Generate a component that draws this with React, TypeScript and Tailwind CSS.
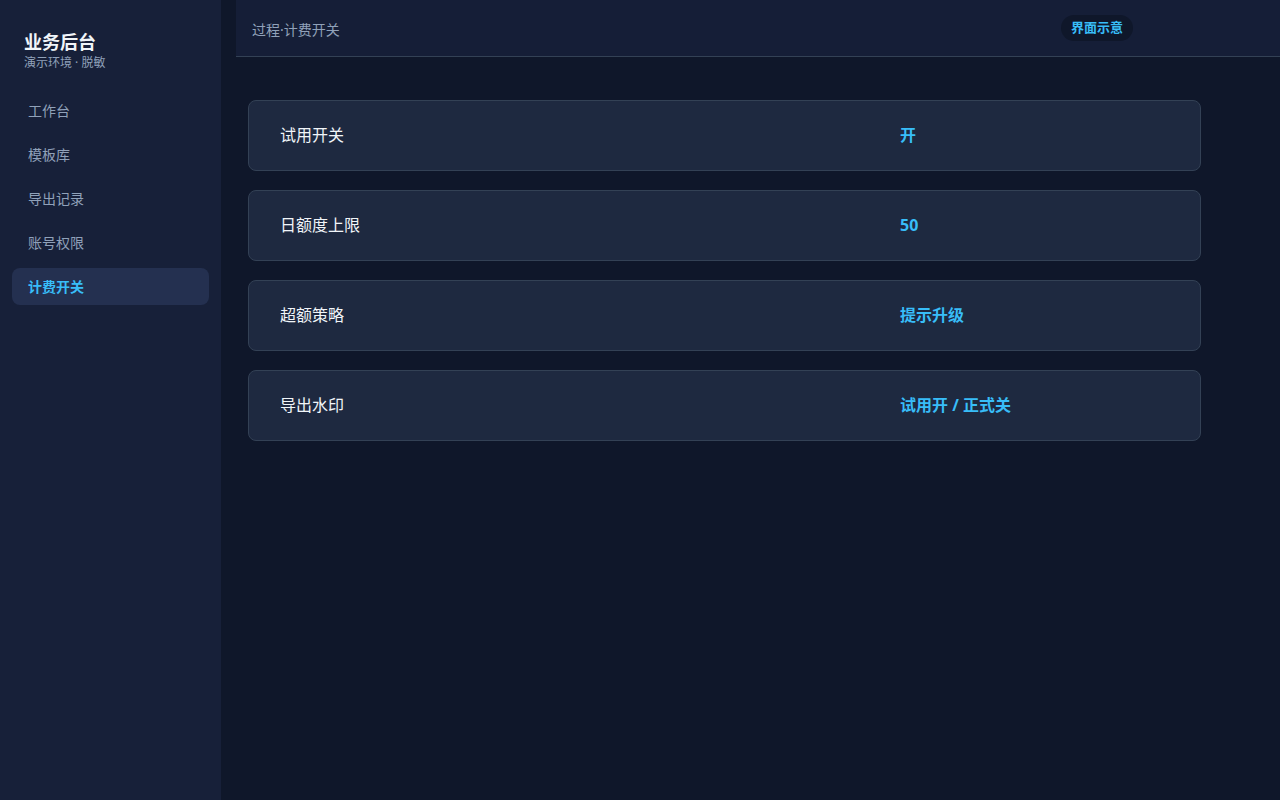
import React from 'react';

const navItems = ['工作台', '模板库', '导出记录', '账号权限', '计费开关'];

const settings = [
  { label: '试用开关', value: '开' },
  { label: '日额度上限', value: '50' },
  { label: '超额策略', value: '提示升级' },
  { label: '导出水印', value: '试用开 / 正式关' },
];

function Sidebar() {
  return (
    <aside className="w-[221px] shrink-0 bg-[#172039] px-3 pt-[30px]">
      <div className="px-3">
        <div className="text-[18px] leading-6 font-bold text-slate-100">业务后台</div>
        <div className="mt-[1px] text-[12px] leading-4 text-slate-400">演示环境 · 脱敏</div>
      </div>
      <nav className="mt-[21px] flex flex-col gap-[7px]">
        {navItems.map((item) => {
          const active = item === '计费开关';
          return (
            <div
              key={item}
              className={`h-[37px] flex items-center px-4 rounded-lg text-[14px] ${
                active ? 'bg-[#243050] text-[#38bdf8] font-bold' : 'text-slate-400'
              }`}
            >
              {item}
            </div>
          );
        })}
      </nav>
    </aside>
  );
}

function SettingRow({ label, value }: { label: string; value: string }) {
  return (
    <div className="h-[71px] flex items-center px-[31px] pb-[1px] rounded-lg border border-[#334155] bg-[#1e2940]">
      <div className="w-[620px] text-[16px] text-slate-100">{label}</div>
      <div className="text-[16px] font-bold text-[#38bdf8]">{value}</div>
    </div>
  );
}

export default function App() {
  return (
    <div
      className="flex min-h-[800px] bg-[#0f172a]"
      style={{ fontFamily: '"Noto Sans", "Noto Sans CJK SC", sans-serif' }}
    >
      <Sidebar />
      <main className="flex-1 pl-[15px]">
        <header className="h-[57px] flex items-center justify-between bg-[#151e37] border-b border-[#334155] pl-4 pr-[147px]">
          <span className="pt-[2px] text-[14px] text-slate-400">过程·计费开关</span>
          <span className="rounded-full bg-[#0f172a] px-[10px] py-[3px] text-[13px] font-bold text-[#38bdf8]">
            界面示意
          </span>
        </header>
        <section className="pl-3 pt-[43px] w-[965px] flex flex-col gap-[19px]">
          {settings.map((s) => (
            <SettingRow key={s.label} label={s.label} value={s.value} />
          ))}
        </section>
      </main>
    </div>
  );
}
